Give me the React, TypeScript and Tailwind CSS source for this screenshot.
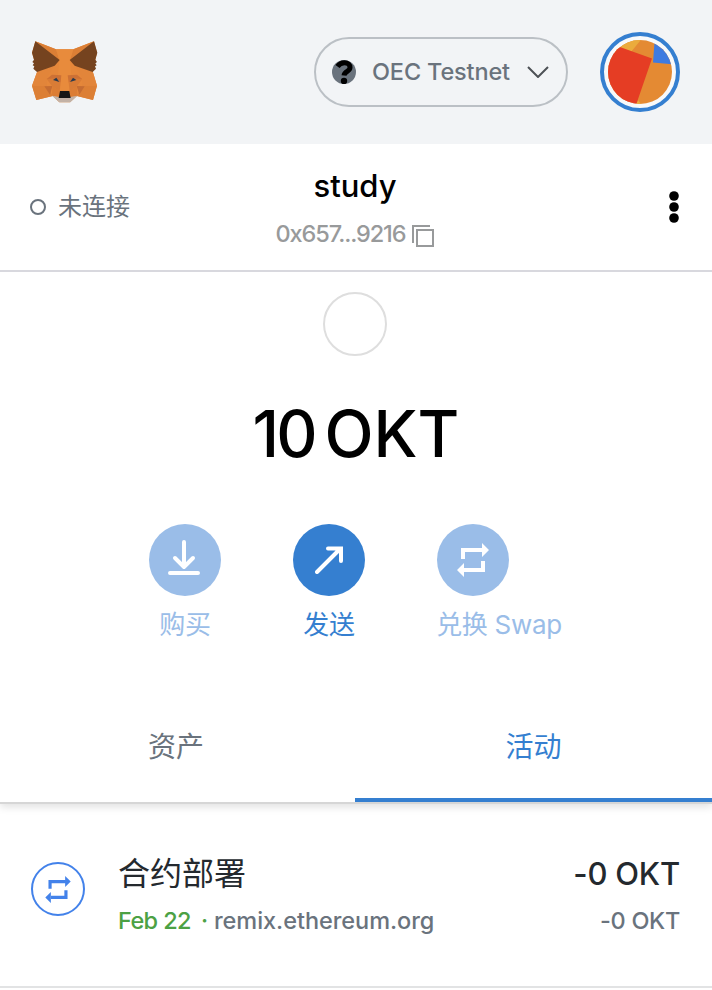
import type { ReactNode } from 'react';

const SANS = "font-['Inter','Noto_Sans_CJK_SC',sans-serif]";

function Fox() {
  return (
    <svg className="h-[85px] w-[90px] shrink-0" viewBox="0 0 270 255">
      <path fill="#e5873a" d="M46 34 108 58H160L222 34 231 68 218 124 231 167 219 210 171 198 150 217H118L98 198 49 210 36 167 52 124 36 68Z" />
      <path fill="#dc7f35" d="M46 34 108 58 118 90ZM222 34 160 58 150 90ZM36 167 80 168 98 198 49 210ZM231 167 187 168 171 198 219 210Z" />
      <path fill="#e2853a" d="M52 124 102 106 80 147 80 168 36 167ZM218 124 166 106 187 147 187 168 231 167Z" />
      <path fill="#e88b3c" d="M108 58H160L150 90 154 135 149 184H119L114 135 118 90Z" />
      <path fill="#cd7135" d="M80 147 96 134 124 136 122 158 102 146ZM187 147 171 134 143 136 146 158 166 146Z" />
      <path fill="#d97c36" d="M80 147 102 146 122 158 119 184 96 168ZM187 147 166 146 146 158 149 184 171 168Z" />
      <path fill="#c56c32" d="M73 169 97 168 90 194ZM194 169 170 168 178 194Z" />
      <path fill="#dc7d34" d="M97 168 119 184 116 201 96 197ZM170 168 149 184 152 201 172 197Z" />
      <path fill="#2b3b4e" d="M99 150 109 143 118 156ZM169 150 159 143 150 156Z" />
      <path fill="#c3b2a6" d="M96 197 117 201H151L172 197 151 217H118Z" />
      <path fill="#171717" d="M120 183H148L152 204H116Z" />
      <path fill="#75431f" d="M46 34 119 90 104 107 51 126 40 116 43 109 38 106 42 100 37 96 42 89 36 68ZM222 34 149 90 164 107 218 126 228 116 225 109 230 106 226 100 231 96 226 89 232 68Z" />
    </svg>
  );
}

function Avatar() {
  return (
    <svg className="size-20 shrink-0" viewBox="0 0 80 80">
      <defs>
        <clipPath id="face"><circle cx="40" cy="40" r="32" /></clipPath>
      </defs>
      <circle cx="40" cy="40" r="38" fill="#f8f9fa" stroke="#357fd0" strokeWidth="4" />
      <g clipPath="url(#face)">
        <path fill="#e48a33" d="M0 0H80V80H0Z" />
        <path fill="#ebab3c" d="M10 4H44L31 20 10 20ZM33 80 38 68 44 76Z" />
        <path fill="#3f7be0" d="M55 4 53 30.500 80 33V4Z" />
        <path fill="#e53d24" d="M0 8 52 26.500 35 76H0Z" />
      </g>
    </svg>
  );
}

function SwapGlyph({ className }: { className: string }) {
  return (
    <svg className={className} viewBox="0 0 32 34">
      <path fill="none" stroke="currentColor" strokeWidth="4" d="M6 16V7H26M26 18V27H7" />
      <path fill="currentColor" d="M25 0 32 7 25 14ZM7 20 0 27 7 34Z" />
    </svg>
  );
}

function Action({ label, tone, width, children }: { label: string; tone: string; width: string; children: ReactNode }) {
  return (
    <div className={`flex flex-col ${width} ${tone}`}>
      <div className="flex size-[72px] items-center justify-center rounded-full bg-current">
        <span className="flex text-white">{children}</span>
      </div>
      <div className="mt-[9px] -ml-4 w-[calc(100%+32px)] text-center text-[26px] leading-10 tracking-[-0.300px] whitespace-nowrap">{label}</div>
    </div>
  );
}

export default function App() {
  return (
    <div className={`flex h-[990px] w-[712px] flex-col overflow-hidden bg-white text-black ${SANS}`}>
      <header className="flex h-36 shrink-0 items-center bg-[#f2f4f6] pr-8 pl-5">
        <Fox />
        <div className="ml-auto flex h-[70px] w-[254px] items-center rounded-full border-2 border-[#bbc0c5] pl-4">
          <svg className="size-6" viewBox="0 0 24 24">
            <circle cx="12" cy="12" r="12" fill="#6a737d" />
            <path d="M5.500 6.500C7.500 3.500 9.500 2.800 12.500 2.800 16 2.800 18 5 18 7.500 18 11.500 12.500 11 12 15.500" fill="none" stroke="#000" strokeWidth="5" />
            <circle cx="12" cy="21" r="3.200" />
          </svg>
          <span className="ml-4 w-[137px] text-[23.500px] leading-8 font-medium tracking-[-0.150px] whitespace-nowrap text-[#6a737d]">OEC Testnet</span>
          <svg className="ml-[18px] h-3 w-[22px]" viewBox="0 0 22 12">
            <path d="M1 1 11 11 21 1" fill="none" stroke="#4d5156" strokeWidth="2" />
          </svg>
        </div>
        <div className="ml-8 flex"><Avatar /></div>
      </header>

      <section className="grid h-32 shrink-0 grid-cols-[200px_1fr_200px] items-center border-b-2 border-[#d8d8de]">
        <div className="flex items-center pl-[30px] text-2xl text-[#6a737d]">
          <span className="size-4 rounded-full border-2 border-[#6a737d]" />
          <span className="ml-3">未连接</span>
        </div>
        <div className="flex flex-col items-center pt-1.5 pr-0.5">
          <div className="text-[31px] leading-[46px] font-medium">study</div>
          <div className="flex items-center pt-px text-[23.500px] leading-[47px] font-medium tracking-[-1.100px] text-[#989a9b]">
            0x657...9216
            <svg className="mt-1 ml-[7px] size-[22px]" viewBox="0 0 22 22" fill="none" stroke="#989a9b" strokeWidth="2">
              <path d="M18 1H1V18M5 5H21V21H5Z" />
            </svg>
          </div>
        </div>
        <svg className="mr-[33px] h-8 w-2.5 justify-self-end" viewBox="0 0 10 32">
          <circle cx="5" cy="5" r="4.800" /><circle cx="5" cy="16" r="4.800" /><circle cx="5" cy="27" r="4.800" />
        </svg>
      </section>

      <section className="relative z-10 flex h-[410px] shrink-0 flex-col items-center bg-white pt-5">
        <div className="mr-0.5 size-16 rounded-full border-2 border-[#dedede]" />
        <div className="mt-9 text-[64px] leading-[84px] font-[450] whitespace-nowrap [word-spacing:-8px]">
          <span className="tracking-[-3px]">1</span><span className="tracking-[-2px]">0</span> OKT
        </div>
        <div className="mt-12 flex w-full gap-[72px] pl-[149px]">
          <Action label="购买" tone="text-[#9abde8]" width="w-[72px]">
            <svg className="mr-0.5 mb-[5px] h-[35px] w-8" viewBox="0 0 32 35" fill="none" stroke="currentColor" strokeWidth="4" strokeLinecap="round" strokeLinejoin="round">
              <path d="M16 2V27M7 18 16 27 25 18M2 33H30" />
            </svg>
          </Action>
          <Action label="发送" tone="text-[#357fd0]" width="w-[72px]">
            <svg className="size-7" viewBox="0 0 28 28" fill="none" stroke="currentColor" strokeWidth="4" strokeLinecap="round">
              <path d="M2 26 25 3M13 2.500H26V15" />
            </svg>
          </Action>
          <Action label="兑换 Swap" tone="text-[#9abde8]" width="w-[124px]">
            <SwapGlyph className="h-[34px] w-8" />
          </Action>
        </div>
      </section>

      <nav className="flex h-[122px] shrink-0 border-b-2 border-[#d6d6d6] text-[28px] leading-[131px] shadow-[0_3px_8px_rgba(0,0,0,0.12)]">
        <div className="w-[355px] pr-[3px] text-center text-[#6a737d]">资产</div>
        <div className="flex-1 border-b-4 border-[#357fd0] text-center text-[#357fd0]">活动</div>
      </nav>

      <section className="flex h-[184px] shrink-0 border-b-2 border-[#e2e3e4] px-8 pt-[47px]">
        <div className="mt-[11px] -ml-px flex size-[54px] items-center justify-center rounded-full border-2 border-[#4382ea] text-[#4382ea]">
          <SwapGlyph className="h-[27px] w-[26px]" />
        </div>
        <div className="ml-[33px] flex-1">
          <div className="text-[32px] leading-[46px] text-[#24292e]">合约部署</div>
          <div className="flex pt-px text-[23.500px] leading-[46px] font-medium whitespace-nowrap text-[#6a737d]">
            <span className="w-24 tracking-[-0.600px] text-[#4ca144]">Feb 22<span className="ml-2.5">·</span></span>
            <span className="tracking-[-0.050px]">remix.ethereum.org</span>
          </div>
        </div>
        <div className="text-right whitespace-nowrap">
          <div className="text-[31px] leading-[46px] font-[450] tracking-[-0.200px] text-[#24292e]">-0 OKT</div>
          <div className="pt-px text-[23.500px] leading-[46px] font-[450] tracking-[-0.300px] text-[#6a737d]">-0 OKT</div>
        </div>
      </section>
    </div>
  );
}
